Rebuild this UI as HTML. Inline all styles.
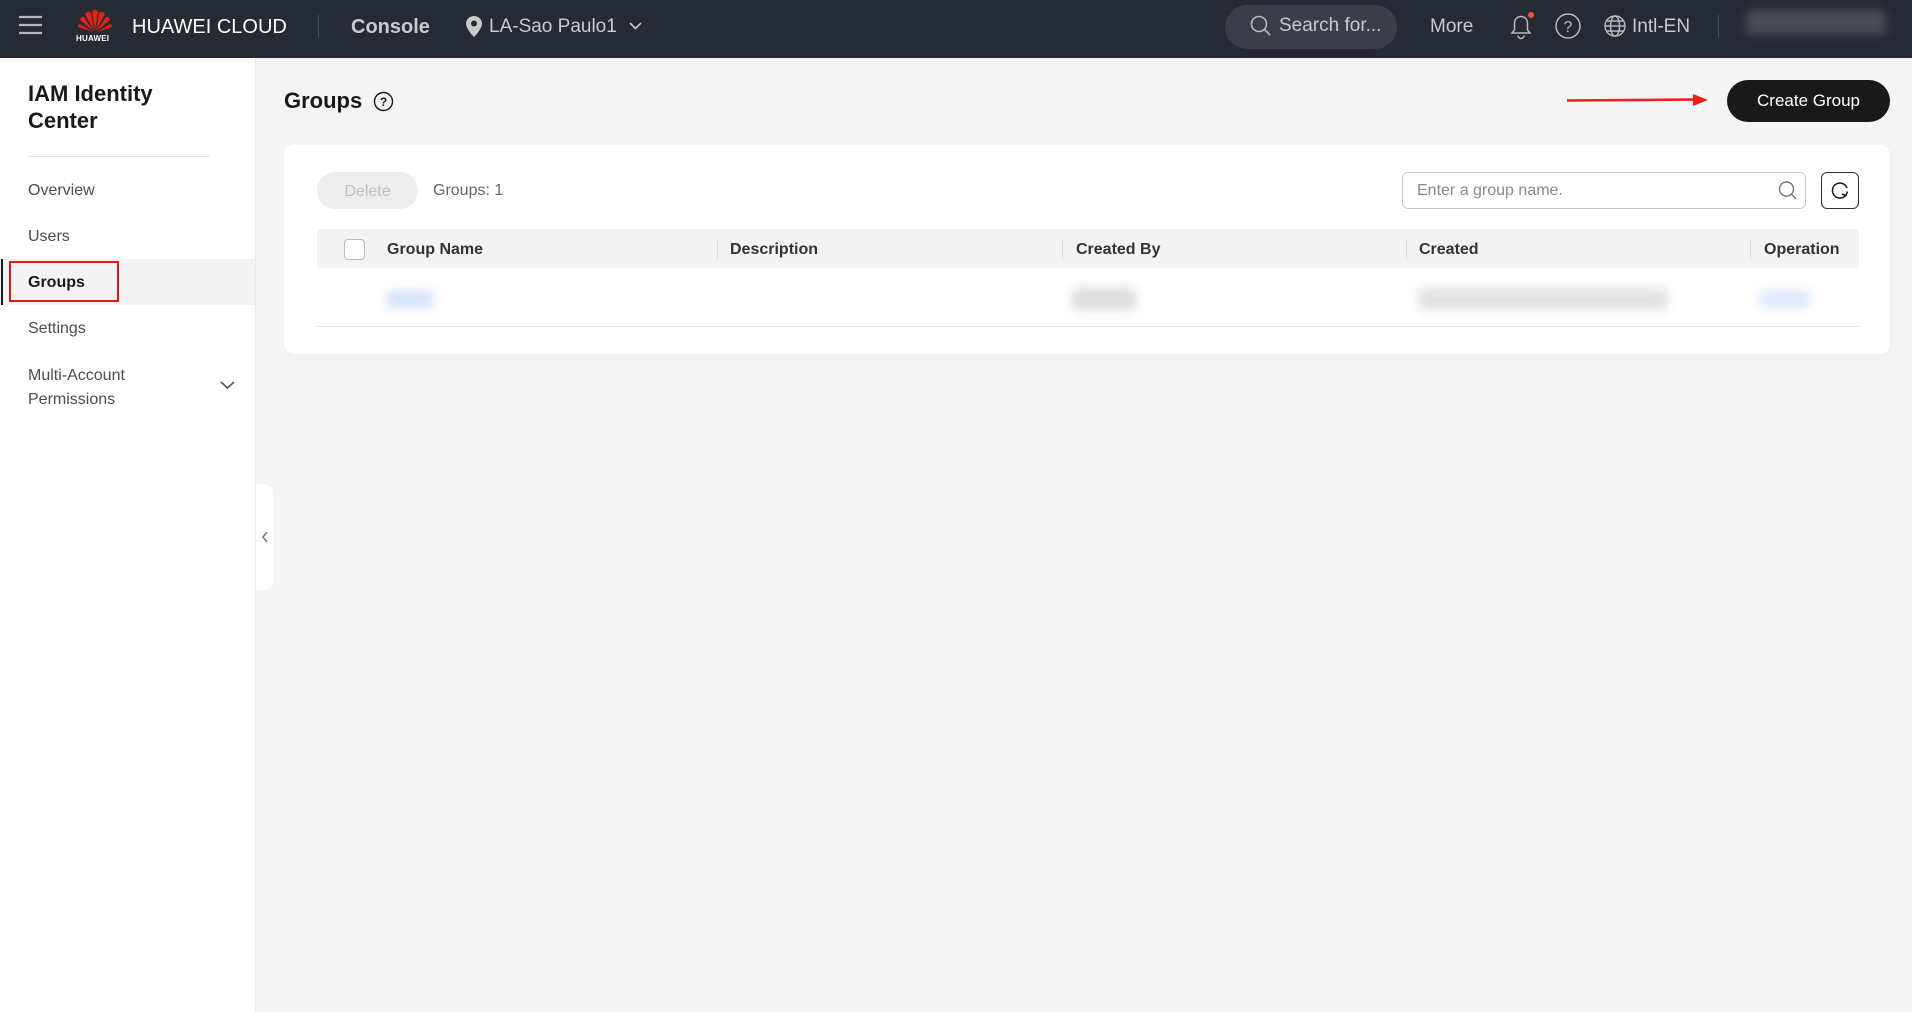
<!DOCTYPE html>
<html><head><meta charset="utf-8"><style>
*{box-sizing:border-box;margin:0;padding:0}
body{width:1912px;height:1012px;overflow:hidden;background:#f4f4f4;font-family:"Liberation Sans",sans-serif;position:relative;color:#191919}
.abs{position:absolute}
#hdr{left:0;top:0;width:1912px;height:58px;background:#262a33}
.ht{position:absolute;color:#d8d9dc;font-size:20px;line-height:58px;top:-2px;white-space:nowrap}
#side{left:0;top:58px;width:256px;height:954px;background:#fff;border-right:1px solid #e8e8e8}
.nav{position:absolute;left:28px;font-size:16px;color:#4d4d4d;white-space:nowrap}
.th{position:absolute;top:230px;height:39px;line-height:39px;font-size:16px;font-weight:bold;color:#333}
.dv{position:absolute;top:239px;width:1px;height:20px;background:#ddd}
.blur{position:absolute;filter:blur(5px);border-radius:4px}
</style></head><body>
<div id="hdr" class="abs">
 <svg class="abs" style="left:19px;top:15px" width="23" height="20"><g stroke="#b4b7be" stroke-width="2.2"><line x1="0" y1="2" x2="23" y2="2"/><line x1="0" y1="10" x2="23" y2="10"/><line x1="0" y1="18" x2="23" y2="18"/></g></svg>
 <svg class="abs" style="left:77px;top:6px" width="36" height="28" viewBox="0 0 36 28"><g fill="#e4211b">
  <path d="M18 25 L15 6 Q18 1 21 6Z"/><path d="M17 25 L8 8 Q11 4 14 7Z"/><path d="M19 25 L28 8 Q25 4 22 7Z"/>
  <path d="M16.5 25.5 L3 14 Q4 10 7 11Z"/><path d="M19.5 25.5 L33 14 Q32 10 29 11Z"/>
  <path d="M16 26 L1 21 Q1 18 3 18Z"/><path d="M20 26 L35 21 Q35 18 33 18Z"/></g></svg>
 <div class="abs" style="left:76px;top:34px;font-size:8px;font-weight:bold;color:#fff;letter-spacing:.2px">HUAWEI</div>
 <div class="ht" style="left:132px;color:#fff;font-size:20px">HUAWEI CLOUD</div>
 <div class="abs" style="left:318px;top:15px;width:1px;height:22px;background:#4a4e57"></div>
 <div class="ht" style="left:351px;font-weight:bold;color:#c9cacd">Console</div>
 <svg class="abs" style="left:466px;top:16px" width="16" height="21" viewBox="0 0 16 21"><path d="M8 0C3.6 0 0 3.4 0 7.6 0 13 8 21 8 21s8-8 8-13.4C16 3.4 12.4 0 8 0z" fill="#c9cacd"/><circle cx="8" cy="7.5" r="3" fill="#262a33"/></svg>
 <div class="ht" style="left:489px;font-size:19px;color:#c9cacd">LA-Sao Paulo1</div>
 <svg class="abs" style="left:629px;top:21px" width="13" height="10"><path d="M1 2l5.5 5.5L12 2" stroke="#c9cacd" stroke-width="1.6" fill="none"/></svg>
 <div class="abs" style="left:1225px;top:5px;width:172px;height:44px;border-radius:22px;background:#3b3e46"></div>
 <svg class="abs" style="left:1250px;top:15px" width="22" height="22"><circle cx="9" cy="9" r="7.5" stroke="#b8bac0" stroke-width="1.6" fill="none"/><line x1="14.5" y1="14.5" x2="20" y2="20" stroke="#b8bac0" stroke-width="1.6"/></svg>
 <div class="ht" style="left:1279px;top:-3px;font-size:19px;color:#c9cacd">Search for...</div>
 <div class="ht" style="left:1430px;font-size:19px;color:#c9cacd">More</div>
 <svg class="abs" style="left:1508px;top:11px" width="26" height="30"><path d="M4 22h18l-2.5-3V12a6.5 6.5 0 0 0-13 0v7z" stroke="#b8bac0" stroke-width="1.5" fill="none"/><path d="M10 24.5a3 3 0 0 0 6 0" stroke="#b8bac0" stroke-width="1.5" fill="none"/><circle cx="23" cy="4" r="3" fill="#f0524b"/></svg>
 <svg class="abs" style="left:1554px;top:12px" width="28" height="28"><circle cx="14" cy="14" r="12" stroke="#b8bac0" stroke-width="1.5" fill="none"/><text x="14" y="20" text-anchor="middle" font-size="16" fill="#b8bac0" font-family="Liberation Sans">?</text></svg>
 <svg class="abs" style="left:1603px;top:14px" width="24" height="24"><g stroke="#b8bac0" stroke-width="1.4" fill="none"><circle cx="12" cy="12" r="10"/><ellipse cx="12" cy="12" rx="4.5" ry="10"/><line x1="2" y1="12" x2="22" y2="12"/><path d="M4 7h16M4 17h16"/></g></svg>
 <div class="ht" style="left:1632px;font-size:19px;color:#c9cacd">Intl-EN</div>
 <div class="abs" style="left:1718px;top:15px;width:1px;height:22px;background:#4a4e57"></div>
 <div class="blur" style="left:1746px;top:10px;width:140px;height:24px;background:#4a4d55"></div>
</div>

<div id="side" class="abs">
 <div class="abs" style="left:28px;top:22px;font-size:22px;font-weight:bold;line-height:27px;color:#191919">IAM Identity<br>Center</div>
 <div class="abs" style="left:28px;top:98px;width:182px;height:1px;background:#e6e6e6"></div>
</div>
<div class="nav" style="top:182px">Overview</div>
<div class="nav" style="top:228px">Users</div>
<div class="abs" style="left:0;top:259px;width:255px;height:46px;background:#f3f3f3"></div>
<div class="abs" style="left:1px;top:259px;width:2px;height:46px;background:#191919"></div>
<div class="abs" style="left:9px;top:261px;width:110px;height:41px;border:2px solid #e8151b"></div>
<div class="nav" style="top:274px;font-weight:bold;color:#191919">Groups</div>
<div class="nav" style="top:320px">Settings</div>
<div class="nav" style="top:364px;line-height:24px">Multi-Account<br>Permissions</div>
<svg class="abs" style="left:220px;top:380px" width="15" height="10"><path d="M1 2l6.5 6L14 2" stroke="#555" stroke-width="1.6" fill="none"/></svg>
<div class="abs" style="left:256px;top:484px;width:17px;height:106px;background:#fff;border-radius:0 8px 8px 0"></div>
<svg class="abs" style="left:261px;top:531px" width="8" height="12"><path d="M6 1L2 6l4 5" stroke="#666" stroke-width="1.4" fill="none"/></svg>

<div class="abs" style="left:284px;top:88px;font-size:22px;font-weight:bold;color:#191919">Groups</div>
<svg class="abs" style="left:373px;top:91px" width="21" height="21"><circle cx="10.5" cy="10.5" r="9" stroke="#191919" stroke-width="1.4" fill="none"/><text x="10.5" y="15" text-anchor="middle" font-size="12" font-weight="bold" fill="#191919" font-family="Liberation Sans">?</text></svg>
<svg class="abs" style="left:1565px;top:93px" width="145" height="14"><line x1="2" y1="7.5" x2="132" y2="6.5" stroke="#ee1c1c" stroke-width="2.5"/><path d="M128 1l15 6-15 6z" fill="#ee1c1c"/></svg>
<div class="abs" style="left:1727px;top:80px;width:163px;height:42px;border-radius:21px;background:#191919;color:#fff;font-size:17px;line-height:42px;text-align:center">Create Group</div>

<div class="abs" style="left:284px;top:145px;width:1606px;height:209px;background:#fff;border-radius:10px"></div>
<div class="abs" style="left:317px;top:172px;width:101px;height:37px;border-radius:19px;background:#ededed;color:#bdbdbd;font-size:16px;line-height:39px;text-align:center">Delete</div>
<div class="abs" style="left:433px;top:182px;font-size:16px;color:#666">Groups: 1</div>
<div class="abs" style="left:1402px;top:172px;width:404px;height:37px;border:1px solid #c8c8c8;border-radius:6px"></div>
<div class="abs" style="left:1417px;top:182px;font-size:16px;color:#8a8a8a">Enter a group name.</div>
<svg class="abs" style="left:1778px;top:180px" width="20" height="22"><circle cx="8.5" cy="9" r="7" stroke="#777" stroke-width="1.4" fill="none"/><line x1="13.5" y1="14" x2="18" y2="19" stroke="#777" stroke-width="1.4"/></svg>
<div class="abs" style="left:1821px;top:172px;width:38px;height:37px;border:1px solid #333;border-radius:6px"></div>
<svg class="abs" style="left:1829px;top:180px" width="22" height="22"><path d="M17 15A7.5 7.5 0 1 1 18 8" stroke="#191919" stroke-width="1.5" fill="none"/><path d="M13 14l4 1.5 1.5-4" stroke="#191919" stroke-width="1.5" fill="none"/></svg>

<div class="abs" style="left:317px;top:229px;width:1542px;height:39px;background:#f3f3f3"></div>
<div class="abs" style="left:344px;top:239px;width:21px;height:21px;border:1px solid #bbb;border-radius:4px;background:#fff"></div>
<div class="th" style="left:387px">Group Name</div>
<div class="dv" style="left:717px"></div><div class="th" style="left:730px">Description</div>
<div class="dv" style="left:1062px"></div><div class="th" style="left:1076px">Created By</div>
<div class="dv" style="left:1406px"></div><div class="th" style="left:1419px">Created</div>
<div class="dv" style="left:1750px"></div><div class="th" style="left:1764px">Operation</div>
<div class="abs" style="left:317px;top:326px;width:1542px;height:1px;background:#e6e6e6"></div>
<div class="blur" style="left:386px;top:290px;width:48px;height:18px;background:#d7e4fb"></div>
<div class="blur" style="left:1072px;top:288px;width:64px;height:22px;background:#dcdcdc"></div>
<div class="blur" style="left:1418px;top:288px;width:250px;height:22px;background:#e2e2e2"></div>
<div class="blur" style="left:1760px;top:290px;width:50px;height:18px;background:#dde8fb"></div>
</body></html>
